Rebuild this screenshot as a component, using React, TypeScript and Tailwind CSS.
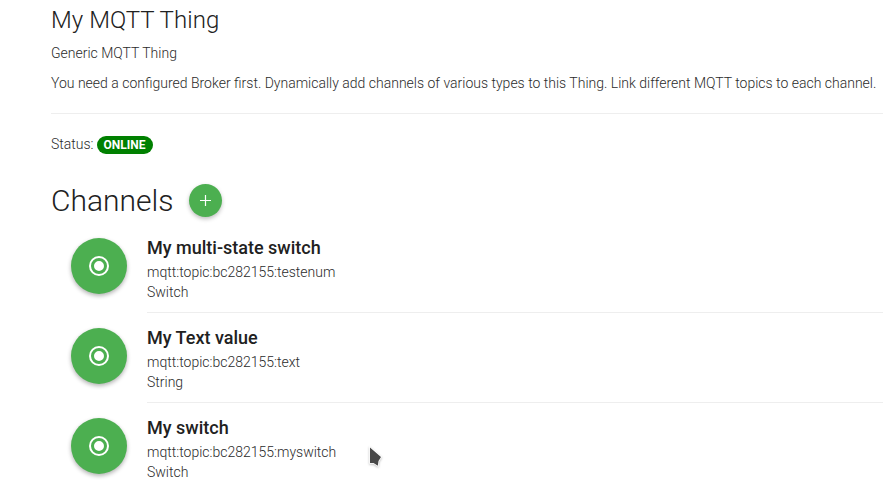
import React from "react";

const channels = [
  { name: "My multi-state switch", id: "mqtt:topic:bc282155:testenum", type: "Switch" },
  { name: "My Text value", id: "mqtt:topic:bc282155:text", type: "String" },
  { name: "My switch", id: "mqtt:topic:bc282155:myswitch", type: "Switch" },
];

export default function App() {
  return (
    <main className="relative h-[498px] w-full overflow-hidden bg-white pl-[51px] font-['Roboto',sans-serif] text-sm font-light leading-5 text-[#2b2b2b]">
      <header className="border-b border-[#eeeeee] pb-5">
        <h1 className="pt-1 text-2xl leading-8 font-light tracking-[0.04px] text-[#212121]">My MQTT Thing</h1>
        <p className="mt-[7px]">Generic MQTT Thing</p>
        <p className="mt-2.5 whitespace-nowrap">
          You need a configured Broker first. Dynamically add channels of various types to this Thing. Link different MQTT topics to each channel.
        </p>
      </header>
      <div className="flex h-[61px] items-start gap-[3px] pt-5">
        <span>Status:</span>
        <span className="mt-0.5 flex h-[18px] w-14 items-center justify-center rounded-full bg-[#008000] text-xs font-bold text-white">ONLINE</span>
      </div>
      <div className="flex h-[51px] items-start gap-[15px] pt-[6px]">
        <h2 className="text-[30px] leading-10 font-light text-[#212121]">Channels</h2>
        <button className="mt-[3px] flex size-[33px] items-center justify-center rounded-full bg-[#4caf50] text-white shadow-[0_2px_4px_rgba(0,0,0,0.26)]">
          <svg viewBox="0 0 11 11" className="size-[11px]" stroke="currentColor" strokeWidth="1.2">
            <path d="M5.500 0v11M0 5.500h11" />
          </svg>
        </button>
      </div>
      <ul>
        {channels.map((channel) => (
          <li key={channel.id} className="group mb-[3px] flex h-[87px] gap-5 pl-5">
            <span className="mt-[12px] flex size-14 items-center justify-center rounded-full bg-[#4caf50] text-white shadow-[0_2px_4px_rgba(0,0,0,0.3)]">
              <svg viewBox="0 0 24 24" className="size-6" fill="currentColor">
                <path d="M12 7a5 5 0 1 0 0 10 5 5 0 0 0 0-10zm0-5a10 10 0 1 0 0 20 10 10 0 0 0 0-20zm0 18a8 8 0 1 1 0-16 8 8 0 0 1 0 16z" />
              </svg>
            </span>
            <div className="flex-1 border-b border-[#eeeeee] pt-2.5 group-last:border-0">
              <h3 className="text-lg leading-6 font-medium text-[#212121]">{channel.name}</h3>
              <p className="mt-0.5">{channel.id}</p>
              <p>{channel.type}</p>
            </div>
          </li>
        ))}
      </ul>
      <svg className="absolute top-[445px] left-[367px] h-[24px] w-[17px] drop-shadow-[0_1px_1px_rgba(0,0,0,0.25)]" viewBox="0 0 17 24">
        <path d="M3 2.500v15.500h3.500l2 1.200 2.300 1.500.7-4.700 2.500-4z" fill="#484848" stroke="#fff" strokeWidth="1.5" paintOrder="stroke" />
      </svg>
    </main>
  );
}
